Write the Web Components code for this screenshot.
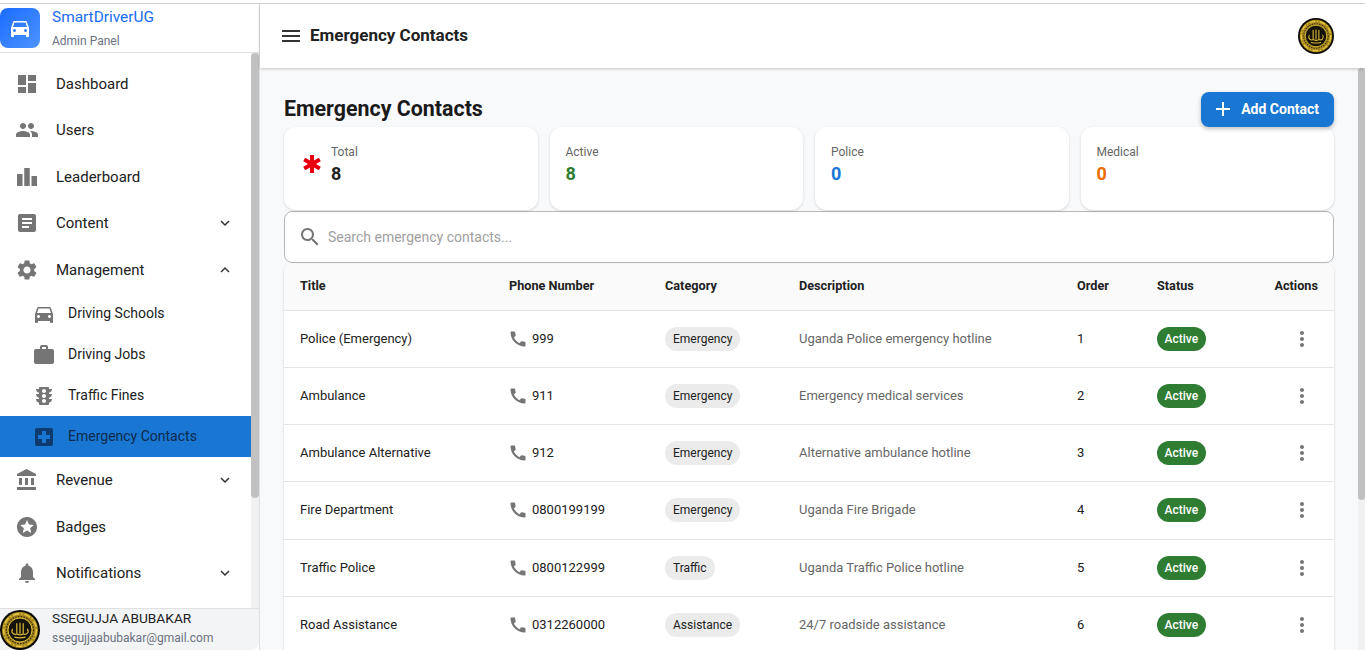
<!DOCTYPE html>
<html lang="en">
<head>
<meta charset="utf-8">
<title>Emergency Contacts</title>
<style>
  html, body { margin: 0; height: 100%; overflow: hidden; background: #fff; }
  body { font-family: Roboto, "Liberation Sans", sans-serif; }
</style>
</head>
<body>
<admin-app></admin-app>
<script>
const ICONS = {
  dashboard: "M3 13h8V3H3v10zm0 8h8v-6H3v6zm10 0h8V11h-8v10zm0-18v6h8V3h-8z",
  people: "M16 11c1.66 0 2.99-1.34 2.99-3S17.66 5 16 5c-1.66 0-3 1.34-3 3s1.34 3 3 3zm-8 0c1.66 0 2.99-1.34 2.99-3S9.66 5 8 5C6.34 5 5 6.34 5 8s1.34 3 3 3zm0 2c-2.33 0-7 1.17-7 3.5V19h14v-2.5c0-2.33-4.67-3.5-7-3.5zm8 0c-.29 0-.62.02-.97.05 1.16.84 1.97 1.97 1.97 3.45V19h6v-2.5c0-2.33-4.67-3.5-7-3.5z",
  leaderboard: "M7.5 21H2V9h5.5v12zm7.25-18h-5.5v18h5.5V3zM22 11h-5.5v10H22V11z",
  article: "M19 3H5c-1.1 0-2 .9-2 2v14c0 1.1.9 2 2 2h14c1.1 0 2-.9 2-2V5c0-1.1-.9-2-2-2zm-5 14H7v-2h7v2zm3-4H7v-2h10v2zm0-4H7V7h10v2z",
  settings: "M19.14 12.94c.04-.3.06-.61.06-.94 0-.32-.02-.64-.07-.94l2.03-1.58c.18-.14.23-.41.12-.61l-1.92-3.32c-.12-.22-.37-.29-.59-.22l-2.39.96c-.5-.38-1.03-.7-1.62-.94l-.36-2.54c-.04-.24-.24-.41-.48-.41h-3.84c-.24 0-.43.17-.47.41l-.36 2.54c-.59.24-1.13.57-1.62.94l-2.39-.96c-.22-.08-.47 0-.59.22L2.74 8.87c-.12.21-.08.47.12.61l2.03 1.58c-.05.3-.09.63-.09.94s.02.64.07.94l-2.03 1.58c-.18.14-.23.41-.12.61l1.92 3.32c.12.22.37.29.59.22l2.39-.96c.5.38 1.03.7 1.62.94l.36 2.54c.05.24.24.41.48.41h3.84c.24 0 .44-.17.47-.41l.36-2.54c.59-.24 1.13-.56 1.62-.94l2.39.96c.22.08.47 0 .59-.22l1.92-3.32c.12-.22.07-.47-.12-.61l-2.01-1.58zM12 15.6c-1.98 0-3.6-1.62-3.6-3.6s1.62-3.6 3.6-3.6 3.6 1.62 3.6 3.6-1.62 3.6-3.6 3.6z",
  car: "M18.92 6.01C18.72 5.42 18.16 5 17.5 5h-11c-.66 0-1.21.42-1.42 1.01L3 12v8c0 .55.45 1 1 1h1c.55 0 1-.45 1-1v-1h12v1c0 .55.45 1 1 1h1c.55 0 1-.45 1-1v-8l-2.08-5.99zM6.5 16c-.83 0-1.5-.67-1.5-1.5S5.67 13 6.5 13s1.5.67 1.5 1.5S7.33 16 6.5 16zm11 0c-.83 0-1.5-.67-1.5-1.5s.67-1.5 1.5-1.5 1.5.67 1.5 1.5-.67 1.5-1.5 1.5zM5 11l1.5-4.5h11L19 11H5z",
  work: "M20 6h-4V4c0-1.11-.89-2-2-2h-4c-1.11 0-2 .89-2 2v2H4c-1.11 0-1.99.89-1.99 2L2 19c0 1.11.89 2 2 2h16c1.11 0 2-.89 2-2V8c0-1.11-.89-2-2-2zm-6 0h-4V4h4v2z",
  traffic: "M20 10h-3V8.86c1.72-.45 3-2 3-3.86h-3V4c0-.55-.45-1-1-1H8c-.55 0-1 .45-1 1v1H4c0 1.86 1.28 3.41 3 3.86V10H4c0 1.86 1.28 3.41 3 3.86V15H4c0 1.86 1.28 3.41 3 3.86V20c0 .55.45 1 1 1h8c.55 0 1-.45 1-1v-1.14c1.72-.45 3-2 3-3.86h-3v-1.14c1.72-.45 3-2 3-3.86zm-8 9c-1.11 0-2-.9-2-2s.89-2 2-2c1.1 0 2 .9 2 2s-.89 2-2 2zm0-5c-1.11 0-2-.9-2-2s.89-2 2-2c1.1 0 2 .9 2 2s-.89 2-2 2zm0-5c-1.11 0-2-.9-2-2 0-1.11.89-2 2-2 1.1 0 2 .89 2 2 0 1.1-.89 2-2 2z",
  hospital: "M19 3H5c-1.1 0-1.99.9-1.99 2L3 19c0 1.1.9 2 2 2h14c1.1 0 2-.9 2-2V5c0-1.1-.9-2-2-2zm-1 11h-4v4h-4v-4H6v-4h4V6h4v4h4v4z",
  bank: "M4 10v7h3v-7H4zm6 0v7h3v-7h-3zM2 22h19v-3H2v3zm14-12v7h3v-7h-3zm-4.5-9L2 6v2h19V6l-9.5-5z",
  stars: "M11.99 2C6.47 2 2 6.48 2 12s4.47 10 9.99 10C17.52 22 22 17.52 22 12S17.52 2 11.99 2zm4.24 16L12 15.45 7.77 18l1.12-4.81-3.73-3.23 4.92-.42L12 5l1.92 4.53 4.92.42-3.73 3.23L16.23 18z",
  bell: "M12 22c1.1 0 2-.9 2-2h-4c0 1.1.89 2 2 2zm6-6v-5c0-3.07-1.64-5.64-4.5-6.32V4c0-.83-.67-1.5-1.5-1.5s-1.5.67-1.5 1.5v.68C7.63 5.36 6 7.92 6 11v5l-2 2v1h16v-1l-2-2z",
  more: "M16.59 8.59 12 13.17 7.41 8.59 6 10l6 6 6-6z",
  less: "m12 8-6 6 1.41 1.41L12 10.83l4.59 4.58L18 14z",
  menu: "M3 18h18v-2H3v2zm0-5h18v-2H3v2zm0-7v2h18V6H3z",
  search: "M15.5 14h-.79l-.28-.27C15.41 12.59 16 11.11 16 9.5 16 5.91 13.09 3 9.5 3S3 5.91 3 9.5 5.91 16 9.5 16c1.61 0 3.09-.59 4.23-1.57l.27.28v.79l5 4.99L20.49 19l-4.99-5zm-6 0C7.01 14 5 11.99 5 9.5S7.01 5 9.5 5 14 7.01 14 9.5 11.99 14 9.5 14z",
  add: "M19 13h-6v6h-2v-6H5v-2h6V5h2v6h6v2z",
  phone: "M20.01 15.38c-1.23 0-2.42-.2-3.53-.56a.977.977 0 0 0-1.01.24l-1.57 1.97c-2.83-1.35-5.48-3.9-6.89-6.83l1.95-1.66c.27-.28.35-.67.24-1.02-.37-1.11-.56-2.3-.56-3.53 0-.54-.45-.99-.99-.99H4.19C3.65 3 3 3.24 3 3.99 3 13.28 10.73 21 20.01 21c.71 0 .99-.63.99-1.18v-3.45c0-.54-.45-.99-.99-.99z",
  dots: "M12 8c1.1 0 2-.9 2-2s-.9-2-2-2-2 .9-2 2 .9 2 2 2zm0 2c-1.1 0-2 .9-2 2s.9 2 2 2 2-.9 2-2-.9-2-2-2zm0 6c-1.1 0-2 .9-2 2s.9 2 2 2 2-.9 2-2-.9-2-2-2z",
  emergency: "M20.79 9.23l-2-3.46L14 8.54V3h-4v5.54L5.21 5.77l-2 3.46L8 12l-4.79 2.77 2 3.46L10 15.46V21h4v-5.54l4.79 2.77 2-3.46L16 12l4.79-2.77z"
};

class MatIcon extends HTMLElement {
  connectedCallback() {
    const size = this.getAttribute("size") || 24;
    const d = ICONS[this.getAttribute("name")];
    this.attachShadow({ mode: "open" }).innerHTML = /*html*/ `
      <style>
        :host { display: inline-flex; flex: none; width: ${size}px; height: ${size}px; color: inherit; }
        svg { width: 100%; height: 100%; fill: currentColor; display: block; }
      </style>
      <svg viewBox="0 0 24 24"><path d="${d}"/></svg>`;
  }
}

class UserAvatar extends HTMLElement {
  connectedCallback() {
    const size = this.getAttribute("size") || 40;
    this.attachShadow({ mode: "open" }).innerHTML = /*html*/ `
      <style>
        :host { display: block; flex: none; width: ${size}px; height: ${size}px; }
        svg { width: 100%; height: 100%; display: block; }
      </style>
      <svg viewBox="0 0 100 100">
        <circle cx="50" cy="50" r="50" fill="#0a0906"/>
        <circle cx="50" cy="50" r="45" fill="#a88a1e"/>
        <circle cx="50" cy="50" r="41" fill="none" stroke="#e2c341" stroke-width="4" stroke-dasharray="16 5 3 5"/>
        <circle cx="50" cy="50" r="34" fill="none" stroke="#3a2f0c" stroke-width="3" stroke-dasharray="4 3"/>
        <circle cx="50" cy="50" r="30" fill="#15120a" stroke="#dcbc3a" stroke-width="2.5"/>
        <g fill="none" stroke="#d9b838" stroke-width="3" stroke-linecap="round">
          <path d="M42 34v24M50 33v25M58 34v24"/>
          <path d="M31 48c-4 10 4 15 12 12 5 3 10 3 15 0 8 3 15-3 11-12"/>
          <path d="M37 68c8 2 18 2 26 0"/>
        </g>
      </svg>`;
  }
}

class NavItem extends HTMLElement {
  connectedCallback() {
    const sub = this.hasAttribute("sub");
    const active = this.hasAttribute("active");
    const chev = this.getAttribute("chevron");
    this.attachShadow({ mode: "open" }).innerHTML = /*html*/ `
      <style>
        :host {
          display: flex; align-items: center;
          height: ${sub ? 41 : 46.5}px;
          padding-left: ${sub ? 32 : 15}px;
          padding-right: 17px;
          font-size: ${sub ? 14 : 15}px;
          color: ${active ? "#0e2a4d" : "#212121"};
          background: ${active ? "#1976d2" : "transparent"};
        }
        mat-icon { color: ${active ? "#0d3b6f" : "#757575"}; }
        .label { margin-left: ${sub ? 12 : 17}px; margin-bottom: ${sub ? 2 : 0}px; flex: 1; white-space: nowrap; }
        .chev { color: #333; }
      </style>
      <mat-icon name="${this.getAttribute("icon")}"></mat-icon>
      <span class="label"><slot></slot></span>
      ${chev ? `<mat-icon class="chev" size="18" name="${chev}"></mat-icon>` : ""}`;
  }
}

class ScrollTrack extends HTMLElement {
  connectedCallback() {
    const width = this.getAttribute("width");
    this.attachShadow({ mode: "open" }).innerHTML = /*html*/ `
      <style>
        :host { display: block; flex: none; width: ${width}px; background: #f1f1f1; }
        div { height: ${this.getAttribute("thumb")}px; background: #c1c1c1; border-radius: ${width / 2}px; }
      </style>
      <div></div>`;
  }
}

class SideBar extends HTMLElement {
  connectedCallback() {
    this.attachShadow({ mode: "open" }).innerHTML = /*html*/ `
      <style>
        :host {
          display: flex; flex-direction: column;
          width: 260px; box-sizing: border-box; height: 100%;
          border-right: 1px solid #e0e0e0; background: #fff; min-height: 0;
        }
        .brand { display: flex; gap: 12px; height: 48px; flex: none; border-bottom: 1px solid #e0e0e0; }
        .logo {
          width: 40px; height: 40px; margin-top: 4px; border-radius: 8px; flex: none;
          background: linear-gradient(135deg, #1a6cff, #4d94ff); color: #fff;
          display: flex; align-items: center; justify-content: center;
        }
        .brand-text { display: flex; flex-direction: column; }
        .brand-name { font-size: 15.4px; line-height: 20px; margin-top: 3px; color: #1a6cf0; }
        .brand-sub { font-size: 12px; line-height: 16px; margin-top: 6px; color: #6b7280; }
        .scroller { flex: 1; min-height: 0; display: flex; overflow: hidden; }
        nav { flex: 1; min-width: 0; padding-top: 7.5px; }
        .user {
          display: flex; gap: 12px; height: 41px; flex: none; align-items: center;
          border-top: 1px solid #e0e0e0; background: #f3f4f6; border-radius: 0 0 8px 0;
        }
        .user div { display: flex; flex-direction: column; padding-bottom: 4px; }
        .user-name { font-size: 13.7px; line-height: 18px; color: #212121; }
        .user-mail { font-size: 12px; line-height: 16px; margin-top: 3px; color: #6b7280; }
      </style>
      <div class="brand">
        <span class="logo"><mat-icon name="car"></mat-icon></span>
        <div class="brand-text">
          <span class="brand-name">SmartDriverUG</span>
          <span class="brand-sub">Admin Panel</span>
        </div>
      </div>
      <div class="scroller">
        <nav><slot></slot></nav>
        <scroll-track width="8" thumb="445"></scroll-track>
      </div>
      <div class="user">
        <user-avatar size="40"></user-avatar>
        <div>
          <span class="user-name">SSEGUJJA ABUBAKAR</span>
          <span class="user-mail">ssegujjaabubakar@gmail.com</span>
        </div>
      </div>`;
  }
}

class TopBar extends HTMLElement {
  connectedCallback() {
    this.attachShadow({ mode: "open" }).innerHTML = /*html*/ `
      <style>
        :host {
          display: flex; align-items: center; height: 64px; flex: none;
          background: #fff; padding: 0 31px 0 19px; position: relative; z-index: 2;
          box-shadow: 0 1px 3px rgba(0,0,0,.22);
        }
        mat-icon { color: #333; margin-right: 7px; }
        h2 { flex: 1; margin: 0 0 2px; font-size: 17px; font-weight: 700; color: #212121; }
      </style>
      <mat-icon name="menu"></mat-icon>
      <h2><slot></slot></h2>
      <user-avatar size="36"></user-avatar>`;
  }
}

class StatCard extends HTMLElement {
  connectedCallback() {
    const icon = this.getAttribute("icon");
    this.attachShadow({ mode: "open" }).innerHTML = /*html*/ `
      <style>
        :host {
          display: flex; align-items: flex-start; gap: 7px; height: 83px; box-sizing: border-box;
          padding: 17px 16px 0; background: #fff; border-radius: 12px;
          box-shadow: 0 1px 3px rgba(0,0,0,.14);
        }
        mat-icon { color: #e8000f; margin-top: 8px; }
        .label { font-size: 12px; line-height: 17px; color: #666; }
        .value { font-size: 18px; line-height: 24px; font-weight: 700; margin-top: 1px; color: var(--value-color, #212121); }
      </style>
      ${icon ? `<mat-icon name="${icon}"></mat-icon>` : ""}
      <div>
        <div class="label">${this.getAttribute("label")}</div>
        <div class="value"><slot></slot></div>
      </div>`;
  }
}

class SearchBox extends HTMLElement {
  connectedCallback() {
    this.attachShadow({ mode: "open" }).innerHTML = /*html*/ `
      <style>
        :host {
          display: flex; align-items: center; gap: 6px; height: 52px; box-sizing: border-box;
          margin-top: 1px; padding: 0 14px 0 13px; background: #fff;
          border: 1px solid #b8b8b8; border-radius: 8px;
        }
        mat-icon { color: #757575; }
        input {
          flex: 1; border: 0; outline: 0; background: none; padding: 0;
          font: 14px Roboto, "Liberation Sans", sans-serif; color: #212121;
        }
        input::placeholder { color: #a0a0a0; opacity: 1; }
      </style>
      <mat-icon name="search"></mat-icon>
      <input type="text" placeholder="${this.getAttribute("placeholder")}">`;
  }
}

class ContactsTable extends HTMLElement {
  set rows(list) {
    const body = list.map(r => `
      <tr>
        <td class="up">${r[0]}</td>
        <td class="up"><span class="tel"><mat-icon name="phone" size="20"></mat-icon>${r[1]}</span></td>
        <td><span class="chip">${r[2]}</span></td>
        <td class="up desc">${r[3]}</td>
        <td class="up">${r[4]}</td>
        <td><span class="chip active">Active</span></td>
        <td class="act"><mat-icon name="dots"></mat-icon></td>
      </tr>`).join("");
    this.shadowRoot.querySelector("tbody").innerHTML = body;
  }

  constructor() {
    super();
    this.attachShadow({ mode: "open" }).innerHTML = /*html*/ `
      <style>
        :host {
          display: block; margin-top: 1px; background: #fff; border-radius: 8px 8px 0 0;
          box-shadow: 0 1px 3px rgba(0,0,0,.16); overflow: hidden;
        }
        table { width: 100%; border-collapse: collapse; table-layout: fixed; font-size: 13px; color: #212121; }
        th {
          text-align: left; height: 46px; padding: 0 16px 2px; font-size: 12.7px; font-weight: 700;
          background: #fafafa; border-bottom: 1.5px solid #e4e4e4; box-sizing: border-box; white-space: nowrap;
        }
        th:last-child { text-align: right; }
        td { height: 57.25px; padding: 0 16px; border-bottom: 1.5px solid #e4e4e4; box-sizing: border-box; white-space: nowrap; }
        td.up { padding-bottom: 1px; }
        .desc { color: #666; }
        .tel { display: flex; align-items: center; gap: 4px; margin-left: -1px; }
        .tel mat-icon { color: #757575; margin-top: 1px; }
        .chip {
          display: inline-flex; align-items: center; height: 24px; padding: 0 8px; border-radius: 12px;
          background: #ebebeb; font-size: 12px; color: #212121;
        }
        .chip.active { background: #2e7d32; color: #fff; font-weight: 500; padding: 0 7.5px; }
        .act { text-align: right; padding-right: 20px; color: #757575; }
        .act mat-icon { vertical-align: middle; }
      </style>
      <table>
        <colgroup>
          <col style="width:209px"><col style="width:156px"><col style="width:134px">
          <col style="width:278px"><col style="width:80px"><col style="width:117px"><col style="width:76px">
        </colgroup>
        <thead>
          <tr><th>Title</th><th>Phone Number</th><th>Category</th><th>Description</th><th>Order</th><th>Status</th><th>Actions</th></tr>
        </thead>
        <tbody></tbody>
      </table>`;
  }
}

class ContactsPage extends HTMLElement {
  connectedCallback() {
    this.attachShadow({ mode: "open" }).innerHTML = /*html*/ `
      <style>
        :host {
          display: block; flex: 1; min-width: 0; overflow: hidden; background: #f8f9fb;
          padding: 24px 24px 0 24px; box-sizing: border-box;
        }
        .head { display: flex; justify-content: space-between; align-items: flex-start; height: 35px; }
        h1 { margin: 0; font-size: 21.4px; line-height: 33px; font-weight: 700; color: #1a1a1a; }
        button {
          display: flex; align-items: center; gap: 6px; height: 35px; padding: 0 15px 1px 10px;
          border: 0; border-radius: 8px; background: #1976d2; color: #fff;
          font: 700 14px Roboto, "Liberation Sans", sans-serif;
          box-shadow: 0 2px 4px rgba(0,0,0,.25); position: relative; z-index: 1;
        }
        .cards { display: grid; grid-template-columns: repeat(4, 1fr); gap: 12px; }
      </style>
      <div class="head">
        <h1>Emergency Contacts</h1>
        <button><mat-icon name="add"></mat-icon>Add Contact</button>
      </div>
      <div class="cards">
        <stat-card label="Total" icon="emergency">8</stat-card>
        <stat-card label="Active" style="--value-color:#2e7d32">8</stat-card>
        <stat-card label="Police" style="--value-color:#1976d2">0</stat-card>
        <stat-card label="Medical" style="--value-color:#ed6c02">0</stat-card>
      </div>
      <search-box placeholder="Search emergency contacts..."></search-box>
      <contacts-table></contacts-table>`;
    this.shadowRoot.querySelector("contacts-table").rows = [
      ["Police (Emergency)", "999", "Emergency", "Uganda Police emergency hotline", 1],
      ["Ambulance", "911", "Emergency", "Emergency medical services", 2],
      ["Ambulance Alternative", "912", "Emergency", "Alternative ambulance hotline", 3],
      ["Fire Department", "0800199199", "Emergency", "Uganda Fire Brigade", 4],
      ["Traffic Police", "0800122999", "Traffic", "Uganda Traffic Police hotline", 5],
      ["Road Assistance", "0312260000", "Assistance", "24/7 roadside assistance", 6]
    ];
  }
}

class AdminApp extends HTMLElement {
  connectedCallback() {
    this.attachShadow({ mode: "open" }).innerHTML = /*html*/ `
      <style>
        :host {
          display: flex; box-sizing: border-box; overflow: hidden;
          margin-top: 3px; height: calc(100vh - 3px); border-top: 1px solid #cfcfcf;
        }
        .main { flex: 1; min-width: 0; display: flex; flex-direction: column; }
        .body { flex: 1; min-height: 0; display: flex; }
      </style>
      <side-bar>
        <nav-item icon="dashboard">Dashboard</nav-item>
        <nav-item icon="people">Users</nav-item>
        <nav-item icon="leaderboard">Leaderboard</nav-item>
        <nav-item icon="article" chevron="more">Content</nav-item>
        <nav-item icon="settings" chevron="less">Management</nav-item>
        <nav-item sub icon="car">Driving Schools</nav-item>
        <nav-item sub icon="work">Driving Jobs</nav-item>
        <nav-item sub icon="traffic">Traffic Fines</nav-item>
        <nav-item sub active icon="hospital">Emergency Contacts</nav-item>
        <nav-item icon="bank" chevron="more">Revenue</nav-item>
        <nav-item icon="stars">Badges</nav-item>
        <nav-item icon="bell" chevron="more">Notifications</nav-item>
      </side-bar>
      <div class="main">
        <top-bar>Emergency Contacts</top-bar>
        <div class="body">
          <contacts-page></contacts-page>
          <scroll-track width="7" thumb="432"></scroll-track>
        </div>
      </div>`;
  }
}

customElements.define("mat-icon", MatIcon);
customElements.define("user-avatar", UserAvatar);
customElements.define("nav-item", NavItem);
customElements.define("scroll-track", ScrollTrack);
customElements.define("side-bar", SideBar);
customElements.define("top-bar", TopBar);
customElements.define("stat-card", StatCard);
customElements.define("search-box", SearchBox);
customElements.define("contacts-table", ContactsTable);
customElements.define("contacts-page", ContactsPage);
customElements.define("admin-app", AdminApp);
</script>
</body>
</html>
